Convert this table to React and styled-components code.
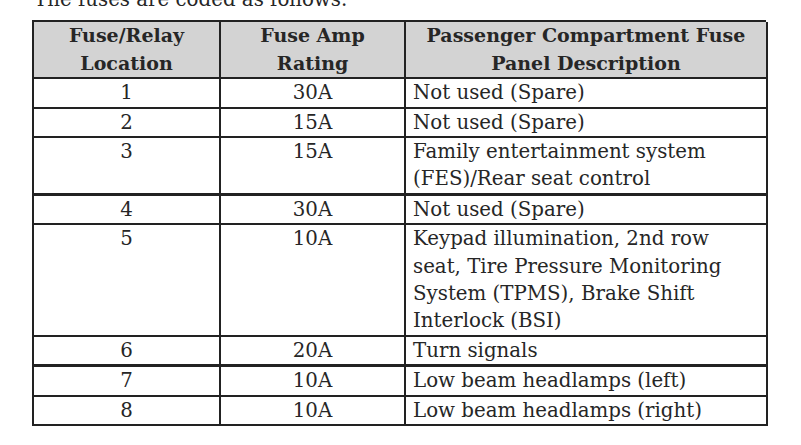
import styled, { createGlobalStyle } from 'styled-components';

const GlobalStyle = createGlobalStyle`
   * {
      box-sizing: border-box;
   }
   body {
      margin: 0;
      background: #fff;
      overflow: hidden;
   }
`;

const fuses = [
   { location: '1', amps: '30A', description: 'Not used (Spare)' },
   { location: '2', amps: '15A', description: 'Not used (Spare)' },
   {
      location: '3',
      amps: '15A',
      description: 'Family entertainment system (FES)/Rear seat control',
      thick: true,
   },
   { location: '4', amps: '30A', description: 'Not used (Spare)' },
   {
      location: '5',
      amps: '10A',
      description:
         'Keypad illumination, 2nd row seat, Tire Pressure Monitoring System (TPMS), Brake Shift Interlock (BSI)',
   },
   { location: '6', amps: '20A', description: 'Turn signals', thick: true },
   { location: '7', amps: '10A', description: 'Low beam headlamps (left)' },
   { location: '8', amps: '10A', description: 'Low beam headlamps (right)' },
];

function App() {
   return (
      <Page>
         <GlobalStyle />
         <Intro>The fuses are coded as follows.</Intro>
         <FuseTable>
            <HeadCell>Fuse/Relay Location</HeadCell>
            <HeadCell>Fuse Amp Rating</HeadCell>
            <HeadCell>Passenger Compartment Fuse Panel Description</HeadCell>
            {fuses.map((fuse) => (
               <Row key={fuse.location}>
                  <Cell $thick={fuse.thick} $center>
                     {fuse.location}
                  </Cell>
                  <Cell $thick={fuse.thick} $center>
                     {fuse.amps}
                  </Cell>
                  <Cell $thick={fuse.thick}>{fuse.description}</Cell>
               </Row>
            ))}
         </FuseTable>
      </Page>
   );
}

export default App;

const Page = styled.div`
   width: 801px;
   height: 445px;
   padding: 0 32px;
   font-family: "DejaVu Serif", serif;
   font-size: 19.8px;
   line-height: 27.4px;
   color: #262626;
`;

const Intro = styled.p`
   margin: -14px 0 7px 2px;
`;

const FuseTable = styled.div`
   display: grid;
   grid-template-columns: 187px 185px 362px;
   width: 734px;
   border-top: 2px solid #222;
   border-left: 2px solid #222;
`;

const Row = styled.div`
   display: contents;
`;

const HeadCell = styled.div`
   padding: 0 6px;
   background: #d3d3d3;
   border-right: 2px solid #222;
   border-bottom: 2px solid #222;
   font-size: 19px;
   font-weight: 700;
   text-align: center;
`;

const Cell = styled.div`
   padding: 0 12px 0 ${(p) => (p.$center ? '12px' : '7px')};
   border-right: 2px solid #222;
   border-bottom: ${(p) => (p.$thick ? '3px' : '2px')} solid #222;
   text-align: ${(p) => (p.$center ? 'center' : 'left')};
`;
